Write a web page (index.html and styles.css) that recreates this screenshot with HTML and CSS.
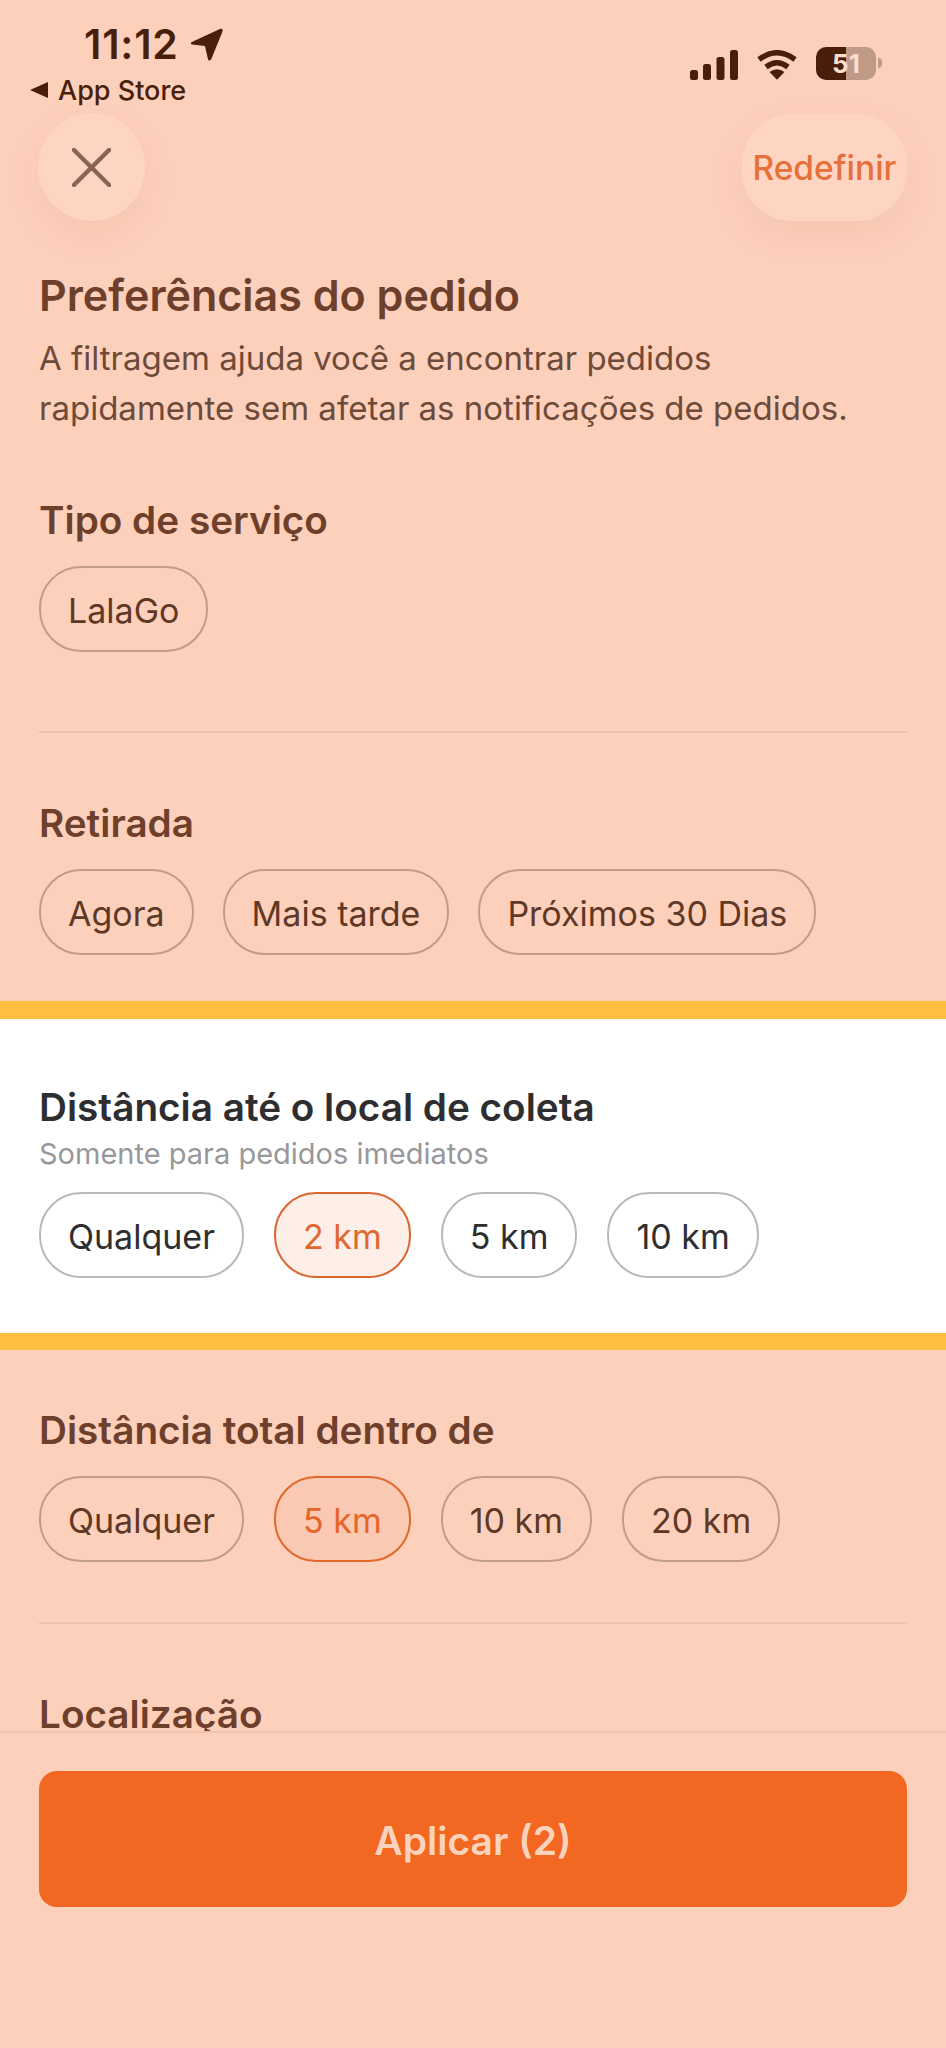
FILE: index.html
```html
<!DOCTYPE html>
<html lang="pt-BR">
<head>
    <meta charset="UTF-8">
    <meta name="viewport" content="width=device-width, initial-scale=1.0">
    <title>Preferências do pedido</title>
    <link rel="stylesheet" href="styles.css">
</head>
<body>
    <div class="screen">
        <div class="status">
            <div class="status-left">
                <div class="time">11:12
                    <svg class="arrow" viewBox="0 0 32 32"><path d="M29.500 0.800 L1.800 13.500 Q-0.500 15 2 16 L14.500 17.500 L17.500 30.500 Q18.500 32.500 20.500 30.500 L31.500 3.500 Q32.300 0.200 29.500 0.800 Z"/></svg>
                </div>
                <div class="back">
                    <svg class="back-tri" viewBox="0 0 18 16"><path d="M0 8 L18 0 L18 16 Z"/></svg>
                    App Store
                </div>
            </div>
            <div class="status-right">
                <svg class="signal" viewBox="0 0 48 30">
                    <rect x="0" y="20" width="8" height="10" rx="2.500"/>
                    <rect x="13" y="14" width="8" height="16" rx="2.500"/>
                    <rect x="26.500" y="7" width="8" height="23" rx="2.500"/>
                    <rect x="40" y="0" width="8" height="30" rx="2.500"/>
                </svg>
                <svg class="wifi" viewBox="0 0 42 30">
                    <path d="M3 9.500 Q21 -4 39 9.500" fill="none" stroke-width="5.500"/>
                    <path d="M10 17 Q21 8.500 32 17" fill="none" stroke-width="5.500"/>
                    <path d="M13.500 22 Q21 16.500 28.500 22 L21 29.800 Z" stroke="none" class="wifi-dot"/>
                </svg>
                <div class="battery">51</div>
                <span class="battery-nub"></span>
            </div>
        </div>

        <div class="topbar">
            <button class="close" aria-label="Fechar">
                <svg viewBox="0 0 40 40"><path d="M2 2 L38 38 M38 2 L2 38"/></svg>
            </button>
            <button class="reset">Redefinir</button>
        </div>

        <main class="content">
            <section class="intro">
                <h1>Preferências do pedido</h1>
                <p>A filtragem ajuda você a encontrar pedidos<br>rapidamente sem afetar as notificações de pedidos.</p>
            </section>

            <section class="group group-service">
                <h2>Tipo de serviço</h2>
                <div class="chips">
                    <span class="chip">LalaGo</span>
                </div>
            </section>

            <hr class="divider divider-service">

            <section class="group group-pickup">
                <h2>Retirada</h2>
                <div class="chips">
                    <span class="chip">Agora</span>
                    <span class="chip">Mais tarde</span>
                    <span class="chip">Próximos 30 Dias</span>
                </div>
            </section>

            <section class="highlight">
                <h2>Distância até o local de coleta</h2>
                <div class="hint">Somente para pedidos imediatos</div>
                <div class="chips">
                    <span class="chip">Qualquer</span>
                    <span class="chip active">2 km</span>
                    <span class="chip">5 km</span>
                    <span class="chip">10 km</span>
                </div>
            </section>

            <section class="group group-total">
                <h2>Distância total dentro de</h2>
                <div class="chips">
                    <span class="chip">Qualquer</span>
                    <span class="chip active">5 km</span>
                    <span class="chip">10 km</span>
                    <span class="chip">20 km</span>
                </div>
            </section>

            <hr class="divider divider-total">

            <section class="group group-location">
                <h2>Localização</h2>
            </section>
        </main>

        <footer class="footer">
            <button class="apply">Aplicar (2)</button>
        </footer>
    </div>
</body>
</html>
```

FILE: styles.css
```css
* {
    box-sizing: border-box;
}

body {
    margin: 0;
    padding: 0;
    background-color: #fdd0bc;
    font-family: Inter, "Noto Sans", sans-serif;
    color: #5f3826;
}

.screen {
    width: 946px;
    height: 2048px;
    overflow: hidden;
    background-color: #fdd0bc;
}

/* status bar */
.status {
    height: 113px;
    display: flex;
    justify-content: space-between;
}

.status-left {
    padding: 22px 0 0 30px;
}

.time {
    display: flex;
    align-items: center;
    gap: 11px;
    height: 44px;
    padding-left: 54px;
    font-size: 41px;
    font-weight: 600;
    letter-spacing: 0.8px;
    color: #4a1f0a;
}

.arrow {
    width: 33px;
    height: 33px;
    fill: #4a1f0a;
}

.back {
    display: flex;
    align-items: center;
    gap: 10px;
    height: 34px;
    margin-top: 7px;
    font-size: 27px;
    font-weight: 500;
    color: #4a1f0a;
}

.back-tri {
    width: 18px;
    height: 16px;
    fill: #4a1f0a;
}

.status-right {
    display: flex;
    align-items: center;
    height: 34px;
    margin-top: 46px;
    padding-right: 64px;
}

.signal {
    width: 48px;
    height: 30px;
    margin-top: 3px;
    fill: #4a1f0a;
}

.wifi {
    width: 42px;
    height: 30px;
    margin: 3px 0 0 18px;
    stroke: #4a1f0a;
}

.wifi-dot {
    fill: #4a1f0a;
}

.battery {
    width: 60px;
    height: 33px;
    margin-left: 18px;
    border-radius: 10px;
    background: linear-gradient(to right, #4a1f0a 0, #4a1f0a 50%, #c09a87 50%, #c09a87 100%);
    color: #fbdccd;
    font-size: 26px;
    font-weight: 700;
    line-height: 33px;
    text-align: center;
}

.battery-nub {
    width: 4px;
    height: 10px;
    margin-left: 2px;
    border-radius: 0 4px 4px 0;
    background-color: #c09a87;
}

/* top buttons */
.topbar {
    height: 108px;
    padding: 0 39px 0 38px;
    display: flex;
    justify-content: space-between;
}

.close,
.reset {
    border: none;
    padding: 0;
    background-color: #fed5c3;
    box-shadow: 0 14px 34px rgba(150, 90, 60, 0.08);
    font-family: inherit;
}

.close {
    width: 107px;
    height: 108px;
    border-radius: 50%;
    display: flex;
    align-items: center;
    justify-content: center;
}

.close svg {
    width: 39px;
    height: 39px;
    fill: none;
    stroke: #8a6553;
    stroke-width: 4.500;
    stroke-linecap: round;
}

.reset {
    width: 165px;
    height: 107px;
    margin-top: 1px;
    border-radius: 50px;
    color: #e6703a;
    font-size: 33.500px;
    font-weight: 500;
}

/* scrolling content, cut by the footer */
.content {
    height: 1510px;
    overflow: hidden;
}

.intro {
    padding: 50px 39px 0;
}

h1 {
    margin: 0;
    font-size: 43px;
    line-height: 48px;
    font-weight: 600;
    color: #6e3f2b;
}

.intro p {
    margin: 14px 0 0;
    font-size: 33px;
    line-height: 50px;
    color: #6e4a39;
}

h2 {
    margin: 0;
    font-size: 38.700px;
    line-height: 46px;
    font-weight: 600;
    color: #6e3f2b;
}

.group {
    padding: 0 39px;
}

.group-service {
    margin-top: 64px;
}

.group-pickup {
    margin-top: 67px;
}

.group-total {
    margin-top: 57px;
}

.group-location {
    margin-top: 67px;
}

.chips {
    display: flex;
    gap: 30px;
    margin-top: 23px;
}

.group-pickup .chips {
    gap: 29px;
}

.chip {
    display: flex;
    align-items: center;
    height: 86px;
    padding: 2px 27px 0;
    border: 2px solid #c19c8b;
    border-radius: 42px;
    font-size: 34px;
    font-weight: 400;
    color: #5f3826;
}

.chip.active {
    border-color: #e2672a;
    background-color: #fac9b3;
    color: #e5662a;
}

.divider {
    height: 2px;
    margin: 0 39px;
    border: none;
    background-color: #ecc1ad;
}

.divider-service {
    margin-top: 79px;
}

.divider-total {
    margin-top: 60px;
}

/* white band with the yellow stripes */
.highlight {
    margin-top: 46px;
    padding: 65px 39px 55px;
    border-top: 18px solid #ffbe40;
    border-bottom: 17px solid #ffbe40;
    background-color: #fff;
}

.highlight h2 {
    color: #2e2e30;
}

.hint {
    margin-top: 7px;
    font-size: 29px;
    line-height: 34px;
    color: #98989c;
}

.highlight .chips {
    margin-top: 21px;
}

.highlight .chip {
    border-color: #b9b9bb;
    color: #2e2e30;
}

.highlight .chip.active {
    border-color: #d9652f;
    background-color: #fdeee7;
    color: #e0682f;
}

/* footer */
.footer {
    padding: 38px 39px 0;
    border-top: 2px solid #edc4b1;
}

.apply {
    display: block;
    width: 100%;
    height: 136px;
    padding: 3px 0 0;
    border: none;
    border-radius: 18px;
    background-color: #f26722;
    color: #fbd3bd;
    font-family: inherit;
    font-size: 39px;
    font-weight: 600;
}
```
